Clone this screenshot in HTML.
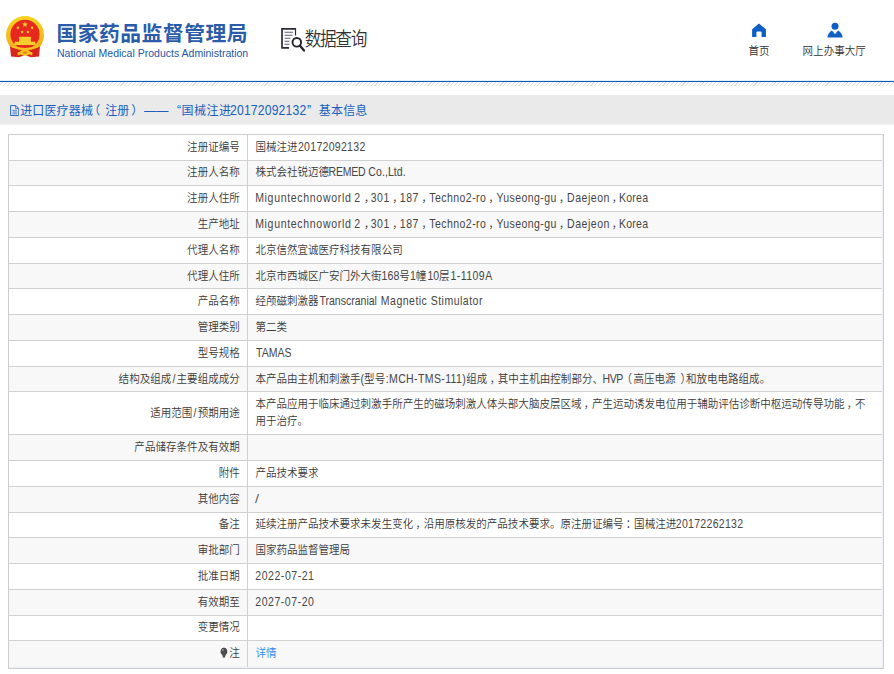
<!DOCTYPE html>
<html lang="zh-CN">
<head>
<meta charset="utf-8">
<title>国家药品监督管理局 数据查询</title>
<style>
html,body{margin:0;padding:0;background:#fff;}
body{width:894px;height:674px;position:relative;overflow:hidden;}
#pg{position:absolute;left:0;top:0;width:1020.00px;height:680.00px;transform-origin:0 0;transform:scale(0.87647,0.99118);
 font-family:"Liberation Sans","Noto Sans CJK SC",sans-serif;font-size:12px;color:#3a3a3a;font-weight:350;}
.abs{position:absolute;white-space:nowrap;}
svg.abs{z-index:2;}
#emblem{left:5px;top:14px;width:40px;height:44px;}
#cn{left:56.45px;top:17.70px;font-size:20.8px;letter-spacing:0.5px;font-weight:bold;color:#2a5caa;line-height:32px;font-family:"Liberation Sans","Noto Sans CJK SC",sans-serif;}
#en{left:56.60px;top:47.90px;font-size:10px;color:#2557a6;line-height:12px;font-family:"Liberation Sans","Noto Sans CJK SC",sans-serif;transform-origin:0 0;transform:scaleX(1.052);}
#sjicon{left:280px;top:27px;width:26px;height:26px;}
#sj{left:347.59px;top:26.58px;font-size:19px;letter-spacing:-1.5px;color:#333;line-height:26px;}
#homeicon{left:751px;top:23px;width:16px;height:15px;}
#home{left:853.99px;top:43.08px;font-size:12px;line-height:17px;color:#333;}
#hallicon{left:825.700px;top:22px;width:18px;height:17px;}
#hall{left:915.72px;top:43.08px;font-size:12px;line-height:17px;color:#333;}
#blueline{left:0;top:80px;width:894px;height:2px;background:linear-gradient(#0b5cb8,#0b5cb8) 0 1px/100% 1px no-repeat,linear-gradient(rgba(11,92,184,.1),rgba(11,92,184,.1)) 0 0/100% 1px no-repeat;}
#hatch{left:0;top:82px;width:894px;height:4px;
 background:repeating-linear-gradient(135deg,#fff 0,#fff 1.9px,#dedede 1.9px,#dedede 2.68px);}
#bar{left:0;top:95px;width:894px;height:30px;background:linear-gradient(#eaeaea,#eaeaea) 0 0/100% 29px no-repeat,#f1f3f7;}
#docicon{left:9.700px;top:104.900px;width:9.400px;height:11.200px;}
.bs{font-weight:400;font-size:13.9px;line-height:20px;color:#1a5fc0;z-index:2;transform-origin:0 0;transform:scale(0.87647,0.99118);font-family:"Liberation Sans","Noto Sans CJK SC",sans-serif;}
.bo{font-weight:400;font-size:12px;line-height:20px;letter-spacing:0.15px;color:#1a5fc0;z-index:2;font-family:"Liberation Sans","Noto Sans CJK SC",sans-serif;}
#t7{letter-spacing:0.2px;}
#t6{letter-spacing:0.5px;}
#tbl{position:absolute;left:9.24px;top:135.29px;width:999px;border:1px solid transparent;box-sizing:border-box;}
.r{display:flex;height:26px;box-sizing:border-box;border-bottom:1px solid transparent;}
#grid{left:8px;top:134px;width:874px;height:533px;border:1px solid #cdcdcd;background:#fff;}
#grid i{position:absolute;display:block;}
#grid .h{left:0;width:874px;height:1px;background:#d1d1d1;}
#grid .b{left:0;width:873px;background:#f8f8f8;}
.r.t{height:43px;}
.l{width:272.7px;box-sizing:border-box;padding-right:8.3px;letter-spacing:0.03px;display:flex;align-items:center;justify-content:flex-end;border-right:1px solid transparent;white-space:nowrap;line-height:17px;}
.v{flex:1;padding-left:8.5px;line-height:17px;display:flex;align-items:center;}
.bulb{width:9px;height:10.5px;vertical-align:-0.7px;margin-right:1.5px;}
.c{position:relative;left:2.7px;}
.s{padding:0 1.3px;}
.e{color:#464646;}
#v14_0{display:inline-block;transform:scaleX(1.35);transform-origin:0 50%;color:#555;}
a{color:#2d8cf0;text-decoration:none;}
</style>
</head>
<body>
<svg id="emblem" class="abs" viewBox="0 0 40 44">
<defs><linearGradient id="gd" x1="0" y1="0" x2="0" y2="1"><stop offset="0" stop-color="#f9d423"/><stop offset="1" stop-color="#f0a81a"/></linearGradient></defs>
<circle cx="20" cy="21" r="19" fill="url(#gd)"/>
<circle cx="20" cy="20.300" r="14.600" fill="#e6281f"/>
<path d="M5 32.5 L13 35.5 L20 37 L27 35.5 L35 32.5 L34 42.6 L26 43.2 L20 41 L14 43.2 L6 42.6z" fill="#d9231d"/>
<path d="M9.3 31 L30.7 31 L30.2 27.8 L26 27.8 L25.7 24.2 L26.6 24.2 L25.4 22.8 L14.6 22.8 L13.4 24.2 L14.3 24.2 L14 27.8 L9.8 27.8z" fill="#f8cf2a"/>
<path d="M6.5 31.6 Q20 36.5 33.500 31.6 L33 33.400 Q20 38.200 7 33.400z" fill="#f6c321"/>
<ellipse cx="20" cy="38.6" rx="5.2" ry="3" fill="#f6c321"/>
<ellipse cx="20" cy="38.6" rx="2.4" ry="1.2" fill="#e8861a"/>
<path d="M12.5 38.5 L16 37.300 L16 40.200 L12.8 41.500z M27.500 38.500 L24 37.300 L24 40.200 L27.200 41.500z" fill="#f6c321"/>
<g fill="#f8cf2a">
<path id="st" d="M20 7.400 L20.750 9.600 L23.100 9.600 L21.200 11 L21.900 13.200 L20 11.850 L18.100 13.200 L18.800 11 L16.900 9.600 L19.250 9.600z"/>
<circle cx="12.900" cy="13.800" r="1.200"/><circle cx="27.100" cy="13.800" r="1.200"/><circle cx="17.100" cy="18" r="1.200"/><circle cx="22.900" cy="18" r="1.200"/>
</g>
</svg>
<div id="cn" class="abs">国家药品监督管理局</div>
<div id="en" class="abs">National Medical Products Administration</div>
<svg id="sjicon" class="abs" viewBox="0 0 26 26">
<path d="M15.5 1.800 H2 V20.800 H9" fill="none" stroke="#2b2b3d" stroke-width="1.700"/>
<path d="M15.500 1 V8.500" fill="none" stroke="#2b2b3d" stroke-width="1.200"/>
<path d="M4.500 5.300 H13 M4.500 8.300 H12.500 M4.500 11.300 H10.500 M4.500 14.300 H9.500 M4.500 17.300 H9.500" stroke="#5e5e70" stroke-width="1.100"/>
<circle cx="16.800" cy="15.300" r="4.300" fill="#fff" stroke="#22222f" stroke-width="1.900"/>
<path d="M20 18.800 L24 23.500" stroke="#22222f" stroke-width="2.300" stroke-linecap="round"/>
</svg>
<svg id="homeicon" class="abs" viewBox="0 0 16 15">
<path d="M8 0.600 L14.900 6.300 V14 H10.600 V9.600 Q10.600 8.600 9.600 8.600 H6.400 Q5.400 8.600 5.400 9.600 V14 H1.100 V6.300z" fill="#0d5fc4"/>
</svg>
<svg id="hallicon" class="abs" viewBox="0 0 18 17">
<circle cx="9" cy="4.300" r="3.500" fill="#0d5fc4"/>
<path d="M1.400 15.500 Q1.800 10.900 6 8.600 L9 12.300 L12 8.600 Q16.200 10.900 16.600 15.500z" fill="#0d5fc4"/>
</svg>
<svg id="docicon" class="abs" viewBox="0 0 10 12">
<path d="M0.600 0.600 H6.300 L9.300 3.600 V11.300 H0.600z" fill="none" stroke="#2465c2" stroke-width="1.050"/>
<path d="M6.100 0.800 V3.800 H9.100" fill="none" stroke="#2465c2" stroke-width="0.900"/>
<path d="M2.500 5.800 H7.500 M2.500 7.600 H7.500 M2.500 9.400 H7.500" stroke="#2465c2" stroke-width="0.800"/>
</svg>
<div id="blueline" class="abs"></div>
<div id="hatch" class="abs"></div>
<div id="bar" class="abs"></div>
<div id="bartitle"><span class="abs bo" id="t0" style="left:20.15px;top:101.10px">进口医疗器械</span><span class="abs bo" id="t1" style="left:88.15px;top:101.10px">（</span><span class="abs bo" id="t2" style="left:105.15px;top:101.10px">注册</span><span class="abs bo" id="t3" style="left:131.30px;top:101.10px">）</span><span class="abs bs" id="t4" style="left:144.25px;top:100.20px">——</span><span class="abs bs" id="t5" style="left:177.30px;top:100.20px">“</span><span class="abs bo" id="t6" style="left:181.45px;top:101.10px">国械注进</span><span class="abs bs" id="t7" style="left:230.20px;top:100.20px">20172092132</span><span class="abs bs" id="t8" style="left:307.25px;top:100.20px">”</span><span class="abs bo" id="t9" style="left:318.85px;top:101.10px">基本信息</span></div>
<div id="grid" class="abs"><i class="b" style="top:26px;height:24px"></i><i class="b" style="top:77px;height:25px"></i><i class="b" style="top:129px;height:24px"></i><i class="b" style="top:180px;height:25px"></i><i class="b" style="top:232px;height:24px"></i><i class="b" style="top:300px;height:25px"></i><i class="b" style="top:352px;height:25px"></i><i class="b" style="top:403px;height:25px"></i><i class="b" style="top:455px;height:25px"></i><i class="b" style="top:506px;height:26px"></i><i class="h" style="top:25px"></i><i class="h" style="top:50px"></i><i class="h" style="top:76px"></i><i class="h" style="top:102px"></i><i class="h" style="top:128px"></i><i class="h" style="top:153px"></i><i class="h" style="top:179px"></i><i class="h" style="top:205px"></i><i class="h" style="top:231px"></i><i class="h" style="top:256px"></i><i class="h" style="top:299px"></i><i class="h" style="top:325px"></i><i class="h" style="top:351px"></i><i class="h" style="top:377px"></i><i class="h" style="top:402px"></i><i class="h" style="top:428px"></i><i class="h" style="top:454px"></i><i class="h" style="top:480px"></i><i class="h" style="top:505px"></i><i style="left:873px;top:0;width:1px;height:533px;background:#eef0f7"></i><i style="left:0;top:531px;width:874px;height:1px;background:#f3f4f8"></i><i style="left:0;top:532px;width:874px;height:1px;background:#eef0f7"></i><i style="left:238px;top:0;width:1px;height:532px;background:#d0d0d0"></i></div>
<div id="pg">
<div id="sj" class="abs">数据查询</div>
<div id="home" class="abs">首页</div>
<div id="hall" class="abs">网上办事大厅</div>
<div id="tbl">
<div class="r " id="r1"><div class="l"><span class="lt">注册证编号</span></div><div class="v"><span class="vt">国械注进<span class="e" id="v1_0" style="letter-spacing:0.34px;margin-left:0.51px">20172092132</span></span></div></div>
<div class="r g" id="r2"><div class="l"><span class="lt">注册人名称</span></div><div class="v"><span class="vt">株式会社锐迈德<span class="e" id="v2_0" style="letter-spacing:-0.23px;margin-left:-0.61px">REMED</span> <span class="e" id="v2_1" style="letter-spacing:0.07px;margin-left:-0.09px">Co.,Ltd.</span></span></div></div>
<div class="r " id="r3"><div class="l"><span class="lt">注册人住所</span></div><div class="v"><span class="vt"><span class="e" id="v3_0" style="letter-spacing:0.78px;margin-left:-0.34px">Miguntechnoworld</span> <span class="e" id="v3_1">2</span><span class="c" id="v3_c0" style="left:4.29px">，</span><span class="e" id="v3_2" style="letter-spacing:0.60px;margin-left:-0.09px">301</span><span class="c" id="v3_c1" style="left:2.92px">，</span><span class="e" id="v3_3" style="letter-spacing:0.62px;margin-left:-0.68px">187</span><span class="c" id="v3_c2" style="left:2.78px">，</span><span class="e" id="v3_4" style="letter-spacing:0.50px;margin-left:-0.19px">Techno2-ro</span><span class="c" id="v3_c3" style="left:2.57px">，</span><span class="e" id="v3_5" style="letter-spacing:0.48px;margin-left:-0.51px">Yuseong-gu</span><span class="c" id="v3_c4" style="left:2.41px">，</span><span class="e" id="v3_6" style="letter-spacing:0.61px;margin-left:-0.28px">Daejeon</span><span class="c" id="v3_c5" style="left:2.03px">，</span><span class="e" id="v3_7" style="letter-spacing:0.24px;margin-left:-1.67px">Korea</span></span></div></div>
<div class="r g" id="r4"><div class="l"><span class="lt">生产地址</span></div><div class="v"><span class="vt"><span class="e" id="v4_0" style="letter-spacing:0.78px;margin-left:-0.34px">Miguntechnoworld</span> <span class="e" id="v4_1">2</span><span class="c" id="v4_c0" style="left:4.29px">，</span><span class="e" id="v4_2" style="letter-spacing:0.60px;margin-left:-0.09px">301</span><span class="c" id="v4_c1" style="left:2.92px">，</span><span class="e" id="v4_3" style="letter-spacing:0.62px;margin-left:-0.68px">187</span><span class="c" id="v4_c2" style="left:2.78px">，</span><span class="e" id="v4_4" style="letter-spacing:0.50px;margin-left:-0.19px">Techno2-ro</span><span class="c" id="v4_c3" style="left:2.57px">，</span><span class="e" id="v4_5" style="letter-spacing:0.48px;margin-left:-0.51px">Yuseong-gu</span><span class="c" id="v4_c4" style="left:2.41px">，</span><span class="e" id="v4_6" style="letter-spacing:0.61px;margin-left:-0.28px">Daejeon</span><span class="c" id="v4_c5" style="left:2.03px">，</span><span class="e" id="v4_7" style="letter-spacing:0.24px;margin-left:-1.67px">Korea</span></span></div></div>
<div class="r " id="r5"><div class="l"><span class="lt">代理人名称</span></div><div class="v"><span class="vt">北京信然宜诚医疗科技有限公司</span></div></div>
<div class="r g" id="r6"><div class="l"><span class="lt">代理人住所</span></div><div class="v"><span class="vt">北京市西城区广安门外大街<span class="e" id="v6_0" style="letter-spacing:0.10px;margin-left:-0.13px">168</span>号<span class="e" id="v6_1">1</span>幢<span class="e" id="v6_2" style="letter-spacing:-0.02px;margin-left:1.32px">10</span>层<span class="e" id="v6_3" style="letter-spacing:0.51px;margin-left:1.03px">1-1109A</span></span></div></div>
<div class="r " id="r7"><div class="l"><span class="lt">产品名称</span></div><div class="v"><span class="vt">经颅磁刺激器<span class="e" id="v7_0" style="letter-spacing:0.01px;margin-left:0.96px">Transcranial</span> <span class="e" id="v7_1" style="letter-spacing:0.55px;margin-left:1.06px">Magnetic</span> <span class="e" id="v7_2" style="letter-spacing:0.56px;margin-left:0.41px">Stimulator</span></span></div></div>
<div class="r g" id="r8"><div class="l"><span class="lt">管理类别</span></div><div class="v"><span class="vt">第二类</span></div></div>
<div class="r " id="r9"><div class="l"><span class="lt">型号规格</span></div><div class="v"><span class="vt"><span class="e" id="v9_0" style="letter-spacing:0.02px;margin-left:0.75px">TAMAS</span></span></div></div>
<div class="r g" id="r10"><div class="l"><span class="lt">结构及组成<span class="e s" id="l10_0">/</span>主要组成成分</span></div><div class="v"><span class="vt">本产品由主机和刺激手<span class="e" id="v10_0">(</span>型号<span class="e" id="v10_1" style="letter-spacing:0.43px;margin-left:0.62px">:MCH-TMS-111)</span>组成<span class="c" id="v10_c0" style="left:2.93px">，</span>其中主机由控制部分、<span class="e" id="v10_2" style="letter-spacing:-0.49px;margin-left:-0.49px">HVP</span><span class="c" id="v10_c1" style="left:-1.71px">（</span>高压电源<span class="c" id="v10_c2" style="left:5.68px">）</span>和放电电路组成。</span></div></div>
<div class="r t" id="r11"><div class="l"><span class="lt">适用范围<span class="e s" id="l11_0">/</span>预期用途</span></div><div class="v"><span class="vt">本产品应用于临床通过刺激手所产生的磁场刺激人体头部大脑皮层区域<span class="c" id="v11_c0">，</span>产生运动诱发电位用于辅助评估诊断中枢运动传导功能<span class="c" id="v11_c1">，</span>不<br>用于治疗。</span></div></div>
<div class="r g" id="r12"><div class="l"><span class="lt">产品储存条件及有效期</span></div><div class="v"><span class="vt"></span></div></div>
<div class="r " id="r13"><div class="l"><span class="lt">附件</span></div><div class="v"><span class="vt">产品技术要求</span></div></div>
<div class="r g" id="r14"><div class="l"><span class="lt">其他内容</span></div><div class="v"><span class="vt"><span class="e" id="v14_0">/</span></span></div></div>
<div class="r " id="r15"><div class="l"><span class="lt">备注</span></div><div class="v"><span class="vt">延续注册产品技术要求未发生变化<span class="c" id="v15_c0">，</span>沿用原核发的产品技术要求。原注册证编号<span class="c" id="v15_c1" style="left:2.59px">：</span>国械注进<span class="e" id="v15_0" style="letter-spacing:0.34px;margin-left:-0.51px">20172262132</span></span></div></div>
<div class="r g" id="r16"><div class="l"><span class="lt">审批部门</span></div><div class="v"><span class="vt">国家药品监督管理局</span></div></div>
<div class="r " id="r17"><div class="l"><span class="lt">批准日期</span></div><div class="v"><span class="vt"><span class="e" id="v17_0" style="letter-spacing:0.62px;margin-left:-0.19px">2022-07-21</span></span></div></div>
<div class="r g" id="r18"><div class="l"><span class="lt">有效期至</span></div><div class="v"><span class="vt"><span class="e" id="v18_0" style="letter-spacing:0.61px;margin-left:-0.19px">2027-07-20</span></span></div></div>
<div class="r " id="r19"><div class="l"><span class="lt">变更情况</span></div><div class="v"><span class="vt"></span></div></div>
<div class="r g" id="r20"><div class="l"><span class="lt"><svg class="bulb" viewBox="0 0 9 11"><path d="M4.500 0.300a4.100 4.100 0 0 0-2.500 7.350c.500.400.800.900.800 1.500h3.400c0-.600.300-1.100.800-1.500A4.100 4.100 0 0 0 4.500.300z" fill="#4d4d4d"/><rect x="2.900" y="9.300" width="3.200" height="1.500" rx=".500" fill="#4d4d4d"/><circle cx="3.300" cy="3" r="1.200" fill="#8c8c8c"/></svg>注</span></div><div class="v"><span class="vt"><a>详情</a></span></div></div>
</div>
</div>
</body>
</html>
